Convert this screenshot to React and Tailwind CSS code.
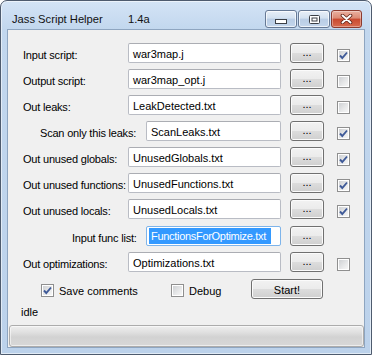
import React from "react";

function CheckBox({ checked }) {
  return (
    <div className="w-[13px] h-[13px] border border-[#8f8f8f] bg-white p-[1px] flex-none">
      <div className="w-full h-full bg-[linear-gradient(135deg,#cfd1d4_0%,#e8e9ea_60%,#f6f6f6_100%)] flex items-center justify-center">
        {checked && (
          <svg width="9" height="9" viewBox="0 0 9 9">
            <path d="M1 4.5 L3.3 7 L8 1.5" fill="none" stroke="#3f5a98" strokeWidth="1.9" strokeLinejoin="miter" />
          </svg>
        )}
      </div>
    </div>
  );
}

function WinButton({ className, children }) {
  return (
    <div
      className={
        "border border-[#707070] rounded-[3px] bg-[linear-gradient(180deg,#f2f2f2_0%,#ebebeb_50%,#dddddd_50%,#cfcfcf_100%)] shadow-[inset_0_0_0_1px_#fbfbfb] flex justify-center text-center flex-none " +
        className
      }
    >
      {children}
    </div>
  );
}

function TextBox({ className, value, selected }) {
  return (
    <div
      className={
        "h-[20px] border rounded-[2px] bg-white leading-[20px] overflow-hidden whitespace-nowrap flex-none " +
        (selected ? "border-[#7eb4ea] pl-[2px] " : "border-[#b9bcc4] border-t-[#abadb3] pl-[4px] ") +
        className
      }
    >
      {selected ? (
        <span className="inline-block bg-[#3399ff] text-white leading-[16px] mt-[1px] pl-[2px] pr-[5px] align-top tracking-[-0.3px]">
          {value}
        </span>
      ) : (
        value
      )}
    </div>
  );
}

function Row({ label, spacerClass, labelClass, boxClass, value, check, checked, selected, rowClass }) {
  return (
    <div className={"flex h-[20px] items-start " + rowClass}>
      <div className={"flex-none " + spacerClass} />
      <div className={"flex-none mt-[6px] leading-[13px] whitespace-nowrap tracking-[-0.2px] " + labelClass}>
        {label}
      </div>
      <TextBox className={boxClass} value={value} selected={selected} />
      <WinButton className="ml-[9px] w-[34px] h-[20px] leading-[17px]">...</WinButton>
      {check && (
        <div className="ml-[13px] mt-[6px] flex-none">
          <CheckBox checked={checked} />
        </div>
      )}
    </div>
  );
}

function TitleBar() {
  return (
    <div className="h-[28px] flex items-start pl-[11px] pr-[9px] flex-none">
      <span className="mt-[12px] leading-[13px] text-[11.2px] w-[116px] whitespace-nowrap text-[#111]">
        Jass Script Helper
      </span>
      <span className="mt-[12px] leading-[13px] text-[11.2px] text-[#111]">1.4a</span>
      <div className="ml-auto mt-[9px] flex gap-[1px]">
        <div className="w-[32px] h-[18px] border border-[#667995] rounded-[3px] bg-[linear-gradient(180deg,#e8eff8_0%,#d3e1f0_45%,#b9cde5_50%,#c4d6ec_100%)] shadow-[inset_0_0_0_1px_rgba(255,255,255,0.7)] flex justify-center items-end pb-[3px]">
          <svg width="12" height="5" viewBox="0 0 12 5">
            <rect x="0.5" y="0.5" width="11" height="4" fill="#ffffff" stroke="#3b3f46" />
          </svg>
        </div>
        <div className="w-[32px] h-[18px] border border-[#667995] rounded-[3px] bg-[linear-gradient(180deg,#e8eff8_0%,#d3e1f0_45%,#b9cde5_50%,#c4d6ec_100%)] shadow-[inset_0_0_0_1px_rgba(255,255,255,0.7)] flex justify-center items-center">
          <svg width="11" height="9" viewBox="0 0 11 9">
            <rect x="0.5" y="0.5" width="10" height="8" rx="1" fill="#ffffff" stroke="#3b3f46" />
            <rect x="3" y="3" width="5" height="3" fill="none" stroke="#3b3f46" />
          </svg>
        </div>
        <div className="w-[31px] h-[18px] border border-[#8c3a2e] rounded-[3px] bg-[linear-gradient(180deg,#eab0a0_0%,#dc8a74_45%,#c9492f_50%,#d76b4f_100%)] shadow-[inset_0_0_0_1px_rgba(255,255,255,0.35)] flex justify-center items-center">
          <svg width="13" height="10" viewBox="0 0 13 10">
            <path d="M2.5 1.5 L10.5 8.5 M10.5 1.5 L2.5 8.5" stroke="#5a1f14" strokeWidth="3.6" strokeLinecap="round" />
            <path d="M2.5 1.5 L10.5 8.5 M10.5 1.5 L2.5 8.5" stroke="#ffffff" strokeWidth="2" strokeLinecap="round" />
          </svg>
        </div>
      </div>
    </div>
  );
}

export default function App() {
  return (
    <div className="w-[372px] h-[355px] font-['Liberation_Sans',Arial,sans-serif] text-[11px] text-black">
      <div className="w-full h-full flex flex-col rounded-t-[7px] border border-[#4e5b6e] bg-[linear-gradient(180deg,#d4e4f6_0px,#c2d7ee_28px,#bcd2eb_100%)] shadow-[inset_0_0_0_1px_rgba(255,255,255,0.55)]">
        <TitleBar />
        <div className="mx-[6px] h-[319px] border border-[#8ea5c0] bg-[#f0f0f0] flex flex-col flex-none">
          <div className="flex flex-col pt-[13px]">
            <Row rowClass="" spacerClass="w-[15px]" label="Input script:" labelClass="w-[105px]" boxClass="w-[153px]" value="war3map.j" check checked />
            <Row rowClass="mt-[6px]" spacerClass="w-[15px]" label="Output script:" labelClass="w-[105px]" boxClass="w-[153px]" value="war3map_opt.j" check checked={false} />
            <Row rowClass="mt-[6px]" spacerClass="w-[15px]" label="Out leaks:" labelClass="w-[105px]" boxClass="w-[153px]" value="LeakDetected.txt" check checked={false} />
            <Row rowClass="mt-[6px]" spacerClass="w-[32px]" label="Scan only this leaks:" labelClass="w-[106px]" boxClass="w-[135px]" value="ScanLeaks.txt" check checked />
            <Row rowClass="mt-[6px]" spacerClass="w-[15px]" label="Out unused globals:" labelClass="w-[105px]" boxClass="w-[153px]" value="UnusedGlobals.txt" check checked />
            <Row rowClass="mt-[6px]" spacerClass="w-[15px]" label="Out unused functions:" labelClass="w-[105px]" boxClass="w-[153px]" value="UnusedFunctions.txt" check checked />
            <Row rowClass="mt-[6px]" spacerClass="w-[15px]" label="Out unused locals:" labelClass="w-[105px]" boxClass="w-[153px]" value="UnusedLocals.txt" check checked />
            <Row rowClass="mt-[7px]" spacerClass="w-[64px]" label="Input func list:" labelClass="w-[74px]" boxClass="w-[135px]" value="FunctionsForOptimize.txt" selected />
            <Row rowClass="mt-[6px]" spacerClass="w-[15px]" label="Out optimizations:" labelClass="w-[105px]" boxClass="w-[153px]" value="Optimizations.txt" check checked={false} />
            <div className="flex h-[20px] items-start mt-[7px]">
              <div className="w-[33px] flex-none" />
              <div className="mt-[5px] flex-none">
                <CheckBox checked />
              </div>
              <span className="ml-[5px] mt-[6px] leading-[13px] whitespace-nowrap w-[112px] flex-none">Save comments</span>
              <div className="mt-[5px] flex-none">
                <CheckBox checked={false} />
              </div>
              <span className="ml-[5px] mt-[6px] leading-[13px] w-[62px] flex-none">Debug</span>
              <WinButton className="w-[72px] h-[20px] leading-[18px] pt-[1px]">Start!</WinButton>
            </div>
            <div className="mt-[7px] pl-[13px] leading-[13px]">idle</div>
          </div>
          <div className="mt-auto h-[22px] ml-[1px] border border-[#acacac] rounded-[3px] bg-[linear-gradient(180deg,#efefef_0%,#dedede_35%,#d2d2d2_55%,#d8d8d8_100%)] shadow-[inset_0_0_0_1px_rgba(255,255,255,0.55)]" />
        </div>
      </div>
    </div>
  );
}
